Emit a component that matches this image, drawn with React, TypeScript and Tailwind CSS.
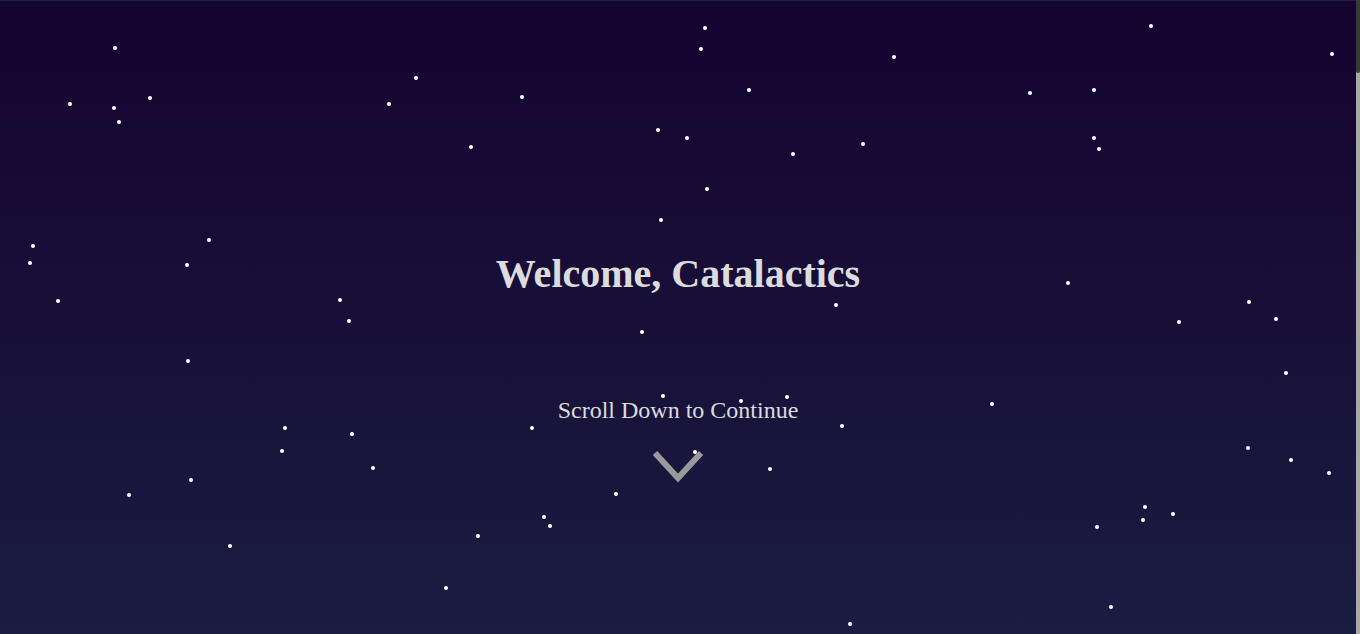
import React from 'react';

const stars: [number, number][] = [
  [115, 47], [705, 27], [701, 48], [1151, 25], [1332, 53], [894, 56], [416, 77],
  [749, 89], [1030, 92], [1094, 89], [70, 103], [114, 107], [150, 97], [119, 121],
  [389, 103], [522, 96], [658, 129], [687, 137], [471, 146], [793, 153], [863, 143],
  [1094, 137], [1099, 148], [707, 188], [661, 219], [33, 245], [209, 239], [30, 262],
  [187, 264], [58, 300], [340, 299], [349, 320], [1068, 282], [836, 304], [1249, 301],
  [1276, 318], [1179, 321], [642, 331], [188, 360], [1286, 372], [663, 395], [741, 400],
  [787, 396], [992, 403], [532, 427], [842, 425], [285, 427], [352, 433], [282, 450],
  [373, 467], [695, 451], [770, 468], [1248, 447], [1291, 459], [1329, 472], [129, 494],
  [191, 479], [616, 493], [544, 516], [550, 525], [1145, 506], [1173, 513], [1143, 519],
  [1097, 526], [478, 535], [230, 545], [446, 587], [1111, 606], [850, 623],
];

export default function App() {
  return (
    <div className="flex h-[634px] overflow-hidden bg-[#1a1c42]">
      <section className="relative flex-1 overflow-hidden border-t border-[#1b2246] bg-gradient-to-b from-[#150330] to-[#1a1c42] font-['Liberation_Serif',serif]">
        {stars.map(([x, y], i) => (
          <span
            key={i}
            className="absolute h-[4px] w-[4px] rounded-full bg-white"
            style={{ left: x - 2, top: y - 2 }}
          />
        ))}
        <div className="relative flex flex-col items-center pt-[253px]">
          <h1 className="text-[40px] leading-10 font-bold text-[#dcdcdc]">Welcome, Catalactics</h1>
          <p className="mt-[100px] text-[24px] leading-8 text-[#dcdcdc]">Scroll Down to Continue</p>
          <svg className="mt-[22px]" width="54" height="40" viewBox="0 0 54 40">
            <polyline points="4,5 27,30 50,5" fill="none" stroke="#9a9a9a" strokeWidth="6" />
          </svg>
        </div>
      </section>
      <div className="w-1 bg-[#a8a8a8]">
        <div className="h-[73px] rounded-b-sm bg-[#3a3a3a]" />
      </div>
    </div>
  );
}
